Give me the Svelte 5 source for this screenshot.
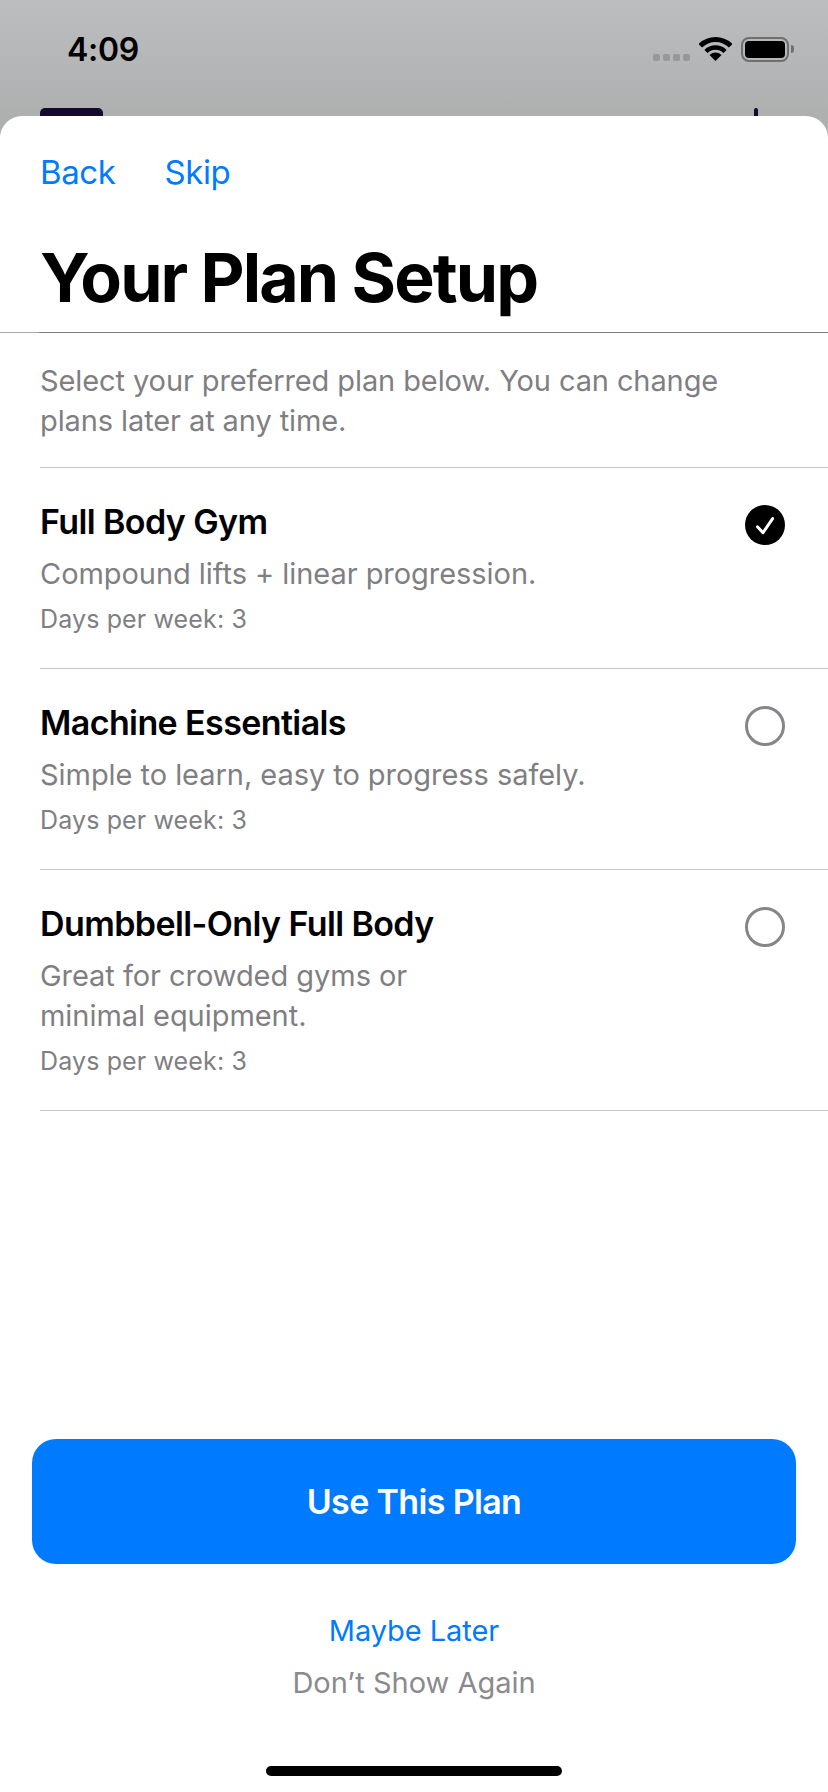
<script>
  const plans = [
    { name: 'Full Body Gym', desc: ['Compound lifts + linear progression.'], days: 3, selected: true },
    { name: 'Machine Essentials', desc: ['Simple to learn, easy to progress safely.'], days: 3, selected: false },
    { name: 'Dumbbell-Only Full Body', desc: ['Great for crowded gyms or', 'minimal equipment.'], days: 3, selected: false }
  ];
</script>

<div class="screen">
  <div class="behind">
    <div class="status">
      <span class="time">4:09</span>
      <div class="indicators">
        <div class="signal"><i></i><i></i><i></i><i></i></div>
        <svg class="wifi" width="33" height="24" viewBox="0 0 33 24" fill="none">
          <path d="M1.3 8.8A21.5 21.5 0 0 1 31.7 8.8" stroke="#000" stroke-width="5" />
          <path d="M7 14.5A13.5 13.5 0 0 1 26 14.5" stroke="#000" stroke-width="4.5" />
          <path d="M16.5 24L10.5 18A8.5 8.5 0 0 1 22.5 18Z" fill="#000" />
        </svg>
        <div class="battery"><div class="cell"></div></div>
        <div class="nub"></div>
      </div>
    </div>
    <div class="peek">
      <div class="peek-wide"></div>
      <div class="peek-thin"></div>
    </div>
  </div>

  <div class="sheet">
    <header class="head">
      <nav class="nav">
        <span>Back</span>
        <span>Skip</span>
      </nav>
      <h1>Your Plan Setup</h1>
    </header>

    <p class="intro">Select your preferred plan below. You can change<br />plans later at any time.</p>

    <ul class="plans">
      {#each plans as plan}
        <li class="plan">
          <div class="plan-text">
            <div class="plan-name">{plan.name}</div>
            <div class="plan-desc">
              {#each plan.desc as line}
                <div>{line}</div>
              {/each}
            </div>
            <div class="plan-days">Days per week: {plan.days}</div>
          </div>
          {#if plan.selected}
            <svg class="radio" width="40" height="40" viewBox="0 0 40 40">
              <circle cx="20" cy="20" r="20" fill="#000" />
              <path d="M12.4 21.8L18 27.6L27.6 13.6" fill="none" stroke="#fff" stroke-width="3" stroke-linecap="round" stroke-linejoin="round" />
            </svg>
          {:else}
            <svg class="radio" width="40" height="40" viewBox="0 0 40 40">
              <circle cx="20" cy="20" r="18.5" fill="none" stroke="#86868a" stroke-width="3" />
            </svg>
          {/if}
        </li>
      {/each}
    </ul>

    <footer class="foot">
      <button class="primary">Use This Plan</button>
      <div class="later">Maybe Later</div>
      <div class="never">Don’t Show Again</div>
      <div class="home"></div>
    </footer>
  </div>
</div>

<style>
  :global(body) {
    margin: 0;
    background: #fff;
  }
  .screen {
    width: 828px;
    height: 1792px;
    display: flex;
    flex-direction: column;
    overflow: hidden;
    font-family: Inter, "Liberation Sans", sans-serif;
    background: linear-gradient(#bcbdbf 0, #aeb0b0 116px) no-repeat;
    background-size: 100% 150px;
  }
  .behind {
    height: 116px;
    flex: none;
    display: flex;
    flex-direction: column;
  }
  .status {
    height: 108px;
    display: flex;
    justify-content: space-between;
    align-items: flex-start;
    box-sizing: border-box;
    padding: 35px 34px 0 67px;
  }
  .time {
    font-size: 32px;
    line-height: 30px;
    font-weight: 600;
    color: #000;
    letter-spacing: -0.3px;
  }
  .indicators {
    display: flex;
    align-items: flex-start;
    padding-top: 2px;
  }
  .signal {
    display: flex;
    gap: 3px;
    margin-top: 17px;
    margin-right: 9px;
  }
  .signal i {
    width: 7px;
    height: 7px;
    border-radius: 2px;
    background: #979999;
  }
  .wifi {
    display: block;
    margin-right: 9px;
  }
  .battery {
    width: 48px;
    height: 25px;
    box-sizing: border-box;
    border: 2px solid #6e7070;
    border-radius: 8px;
    padding: 2px;
  }
  .cell {
    height: 100%;
    background: #000;
    border-radius: 4px;
  }
  .nub {
    width: 3px;
    height: 8px;
    margin: 8px 0 0 2px;
    background: #6e7070;
    border-radius: 0 3px 3px 0;
  }
  .peek {
    height: 8px;
    display: flex;
    justify-content: space-between;
    padding: 0 70px 0 40px;
    overflow: hidden;
  }
  .peek-wide {
    width: 63px;
    height: 16px;
    background: #14092f;
    border-radius: 5px;
  }
  .peek-thin {
    width: 4px;
    height: 16px;
    background: #14092f;
    border-radius: 2px;
  }
  .sheet {
    flex: 1;
    display: flex;
    flex-direction: column;
    background: #fff;
    border-radius: 22px 22px 0 0;
  }
  .head {
    height: 217px;
    box-sizing: border-box;
    padding: 36px 0 0 40px;
    border-bottom: 1px solid #a9a9a9;
    border-image: linear-gradient(to right, #a9a9a9 40px, #808080 40px) 1;
  }
  .nav {
    display: flex;
    gap: 49px;
    font-size: 33px;
    line-height: 40px;
    color: #007aff;
    letter-spacing: -0.4px;
  }
  h1 {
    margin: 45px 0 0;
    font-size: 68px;
    line-height: 80px;
    font-weight: 700;
    color: #000;
    letter-spacing: -1.9px;
  }
  .intro {
    margin: 0;
    padding: 28px 40px 0;
    height: 134px;
    box-sizing: border-box;
    font-size: 29px;
    line-height: 40px;
    color: #7f7f83;
    letter-spacing: -0.1px;
  }
  .plans {
    list-style: none;
    margin: 0 0 0 40px;
    padding: 0;
    border-top: 1px solid #c6c6c8;
  }
  .plan {
    display: flex;
    justify-content: space-between;
    align-items: flex-start;
    padding: 33px 43px 32px 0;
    border-bottom: 1px solid #c6c6c8;
  }
  .plan-name {
    font-size: 34px;
    line-height: 42px;
    font-weight: 600;
    color: #000;
    letter-spacing: -0.6px;
  }
  .plan-desc {
    margin-top: 11px;
    font-size: 29px;
    line-height: 40px;
    color: #7f7f83;
    letter-spacing: -0.05px;
  }
  .plan-days {
    margin-top: 8px;
    font-size: 25px;
    line-height: 34px;
    color: #7f7f83;
    letter-spacing: 0.13px;
  }
  .radio {
    display: block;
    flex: none;
    margin-top: 4px;
  }
  .foot {
    margin-top: auto;
    display: flex;
    flex-direction: column;
    align-items: center;
    padding: 0 32px 16px;
  }
  .primary {
    width: 100%;
    height: 125px;
    border: 0;
    border-radius: 24px;
    background: #007aff;
    color: #fff;
    font: inherit;
    font-size: 34px;
    font-weight: 600;
    letter-spacing: -0.65px;
  }
  .later {
    margin-top: 47px;
    font-size: 29px;
    line-height: 40px;
    color: #007aff;
    letter-spacing: -0.05px;
  }
  .never {
    margin-top: 12px;
    font-size: 29px;
    line-height: 40px;
    color: #8a8a8e;
    letter-spacing: 0;
  }
  .home {
    width: 296px;
    height: 10px;
    margin-top: 63px;
    background: #000;
    border-radius: 5px;
  }
</style>
